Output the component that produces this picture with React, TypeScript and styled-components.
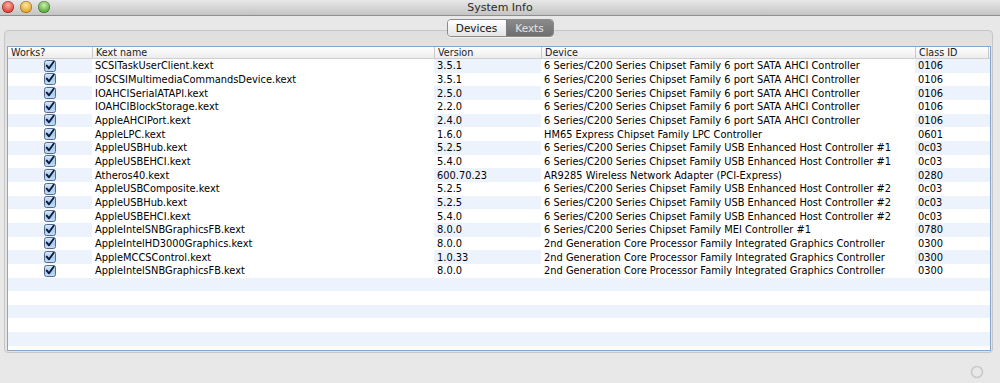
import React from "react";
import styled, { createGlobalStyle } from "styled-components";

const GlobalStyle = createGlobalStyle`
  html, body {
    margin: 0;
    padding: 0;
    background: #e8e8e8;
  }
  body {
    font-family: "DejaVu Sans", "Liberation Sans", sans-serif;
    -webkit-font-smoothing: antialiased;
  }
`;

const Window = styled.div`
  width: 1000px;
  height: 383px;
  display: flex;
  flex-direction: column;
  background: #e8e8e8;
  overflow: hidden;
`;

const TitleBar = styled.div`
  height: 15px;
  display: grid;
  grid-template-columns: 1fr auto 1fr;
  align-items: center;
  background: linear-gradient(#e8e8e8, #c4c4c4);
  border-bottom: 1px solid #8f8f8f;
  font-size: 11px;
  color: #2a2a2a;
`;

const Lights = styled.div`
  display: flex;
  gap: 6px;
  padding-left: 2px;
  margin-top: -2px;
`;

const Light = styled.span<{ $from: string; $to: string }>`
  width: 12px;
  height: 12px;
  border-radius: 50%;
  background: radial-gradient(circle at 50% 35%, ${(p) => p.$from}, ${(p) => p.$to} 75%);
  box-shadow: inset 0 0 0 0.5px rgba(0, 0, 0, 0.45);
`;

const Title = styled.div`
  text-align: center;
  line-height: 15px;
`;

const TabRow = styled.div`
  display: flex;
  justify-content: center;
  margin-top: 3px;
  position: relative;
  z-index: 1;
`;

const Segmented = styled.div`
  display: flex;
  height: 16px;
  border: 1px solid #8a8a8a;
  border-radius: 4px;
  overflow: hidden;
  box-shadow: 0 1px 0 rgba(255, 255, 255, 0.6);
`;

const Tab = styled.div<{ $active?: boolean; $w: number }>`
  width: ${(p) => p.$w}px;
  display: flex;
  align-items: center;
  justify-content: center;
  font-size: 10.5px;
  color: ${(p) => (p.$active ? "#e4e4e4" : "#111")};
  background: ${(p) =>
    p.$active
      ? "linear-gradient(#8a8a8a, #6f6f6f)"
      : "linear-gradient(#ffffff, #e4e4e4)"};
  & + & {
    border-left: 1px solid #7a7a7a;
  }
`;

const Panel = styled.div`
  margin: -7px 7px 0 4px;
  height: 305px;
  border: 1px solid #c6c6c6;
  border-radius: 4px;
  background: linear-gradient(#dedede, #e3e3e3 20px, #e4e4e4);
  padding: 15px 1px 1px 2px;
`;

const Table = styled.div`
  height: 303px;
  border: 1px solid #86a5cf;
  background: #fff;
  overflow: hidden;
`;

const cols = "84px 342px 107px 374px 1fr";

const HeaderRow = styled.div`
  display: grid;
  grid-template-columns: ${cols};
  height: 11px;
  background: linear-gradient(#ffffff, #ececec);
  border-bottom: 1px solid #cfcfcf;
  font-size: 9.6px;
  color: #222;
`;

const HeaderCell = styled.div`
  padding-left: 3px;
  line-height: 11px;
  white-space: nowrap;
  & + & {
    border-left: 1px solid #c8c8c8;
  }
  &:last-child {
    border-right: 1px solid #c8c8c8;
    margin-right: 1px;
  }
`;

const Row = styled.div<{ $odd: boolean }>`
  display: grid;
  grid-template-columns: ${cols};
  height: 13.67px;
  background: ${(p) => (p.$odd ? "#ffffff" : "#edf3fd")};
  font-size: 9.85px;
  color: #000;
`;

const Cell = styled.div<{ $opaque?: boolean; $center?: boolean }>`
  display: flex;
  align-items: center;
  justify-content: ${(p) => (p.$center ? "center" : "flex-start")};
  padding-left: ${(p) => (p.$center ? "0" : "3px")};
  background: ${(p) => (p.$opaque ? "#fff" : "transparent")};
  white-space: nowrap;
  overflow: hidden;
`;

const Footer = styled.div`
  flex: 1;
  display: flex;
  justify-content: flex-end;
  align-items: flex-end;
  padding: 0 16px 4px 0;
`;

const Check = () => (
  <svg width="12" height="12" viewBox="0 0 12 12">
    <defs>
      <linearGradient id="cbg" x1="0" y1="0" x2="0" y2="1">
        <stop offset="0" stopColor="#dcebfc" />
        <stop offset="0.5" stopColor="#a6cbf4" />
        <stop offset="1" stopColor="#c2def9" />
      </linearGradient>
    </defs>
    <rect x="0.5" y="0.5" width="11" height="11" rx="2" fill="url(#cbg)" stroke="#56698a" />
    <path d="M2.7 5.6 L5 8.3 L9.7 1.8" fill="none" stroke="#0d1a33" strokeWidth="1.9" strokeLinecap="round" strokeLinejoin="round" />
  </svg>
);

const sata = "6 Series/C200 Series Chipset Family 6 port SATA AHCI Controller";
const usb1 = "6 Series/C200 Series Chipset Family USB Enhanced Host Controller #1";
const usb2 = "6 Series/C200 Series Chipset Family USB Enhanced Host Controller #2";
const gfx = "2nd Generation Core Processor Family Integrated Graphics Controller";

const kexts = [
  ["SCSITaskUserClient.kext", "3.5.1", sata, "0106"],
  ["IOSCSIMultimediaCommandsDevice.kext", "3.5.1", sata, "0106"],
  ["IOAHCISerialATAPI.kext", "2.5.0", sata, "0106"],
  ["IOAHCIBlockStorage.kext", "2.2.0", sata, "0106"],
  ["AppleAHCIPort.kext", "2.4.0", sata, "0106"],
  ["AppleLPC.kext", "1.6.0", "HM65 Express Chipset Family LPC Controller", "0601"],
  ["AppleUSBHub.kext", "5.2.5", usb1, "0c03"],
  ["AppleUSBEHCI.kext", "5.4.0", usb1, "0c03"],
  ["Atheros40.kext", "600.70.23", "AR9285 Wireless Network Adapter (PCI-Express)", "0280"],
  ["AppleUSBComposite.kext", "5.2.5", usb2, "0c03"],
  ["AppleUSBHub.kext", "5.2.5", usb2, "0c03"],
  ["AppleUSBEHCI.kext", "5.4.0", usb2, "0c03"],
  ["AppleIntelSNBGraphicsFB.kext", "8.0.0", "6 Series/C200 Series Chipset Family MEI Controller #1", "0780"],
  ["AppleIntelHD3000Graphics.kext", "8.0.0", gfx, "0300"],
  ["AppleMCCSControl.kext", "1.0.33", gfx, "0300"],
  ["AppleIntelSNBGraphicsFB.kext", "8.0.0", gfx, "0300"],
];

const EMPTY_ROWS = 8;

export default function App() {
  return (
    <>
      <GlobalStyle />
      <Window>
        <TitleBar>
          <Lights>
            <Light $from="#ffb3a8" $to="#d9342b" />
            <Light $from="#ffe9a3" $to="#e39c1c" />
            <Light $from="#c9f2a8" $to="#4fa534" />
          </Lights>
          <Title>System Info</Title>
          <div />
        </TitleBar>

        <TabRow>
          <Segmented>
            <Tab $w={58}>Devices</Tab>
            <Tab $w={46} $active>Kexts</Tab>
          </Segmented>
        </TabRow>

        <Panel>
          <Table>
            <HeaderRow>
              <HeaderCell>Works?</HeaderCell>
              <HeaderCell>Kext name</HeaderCell>
              <HeaderCell>Version</HeaderCell>
              <HeaderCell>Device</HeaderCell>
              <HeaderCell>Class ID</HeaderCell>
            </HeaderRow>
            {kexts.map(([name, version, device, classId], i) => (
              <Row key={i} $odd={i % 2 === 1}>
                <Cell $center>
                  <Check />
                </Cell>
                <Cell $opaque>{name}</Cell>
                <Cell>{version}</Cell>
                <Cell $opaque>{device}</Cell>
                <Cell>{classId}</Cell>
              </Row>
            ))}
            {Array.from({ length: EMPTY_ROWS }).map((_, i) => (
              <Row key={"e" + i} $odd={(kexts.length + i) % 2 === 1} />
            ))}
          </Table>
        </Panel>

        <Footer>
          <svg width="14" height="14" viewBox="0 0 14 14">
            <circle cx="7" cy="7" r="5.5" fill="none" stroke="#c9c9c9" strokeWidth="1.6" />
          </svg>
        </Footer>
      </Window>
    </>
  );
}
